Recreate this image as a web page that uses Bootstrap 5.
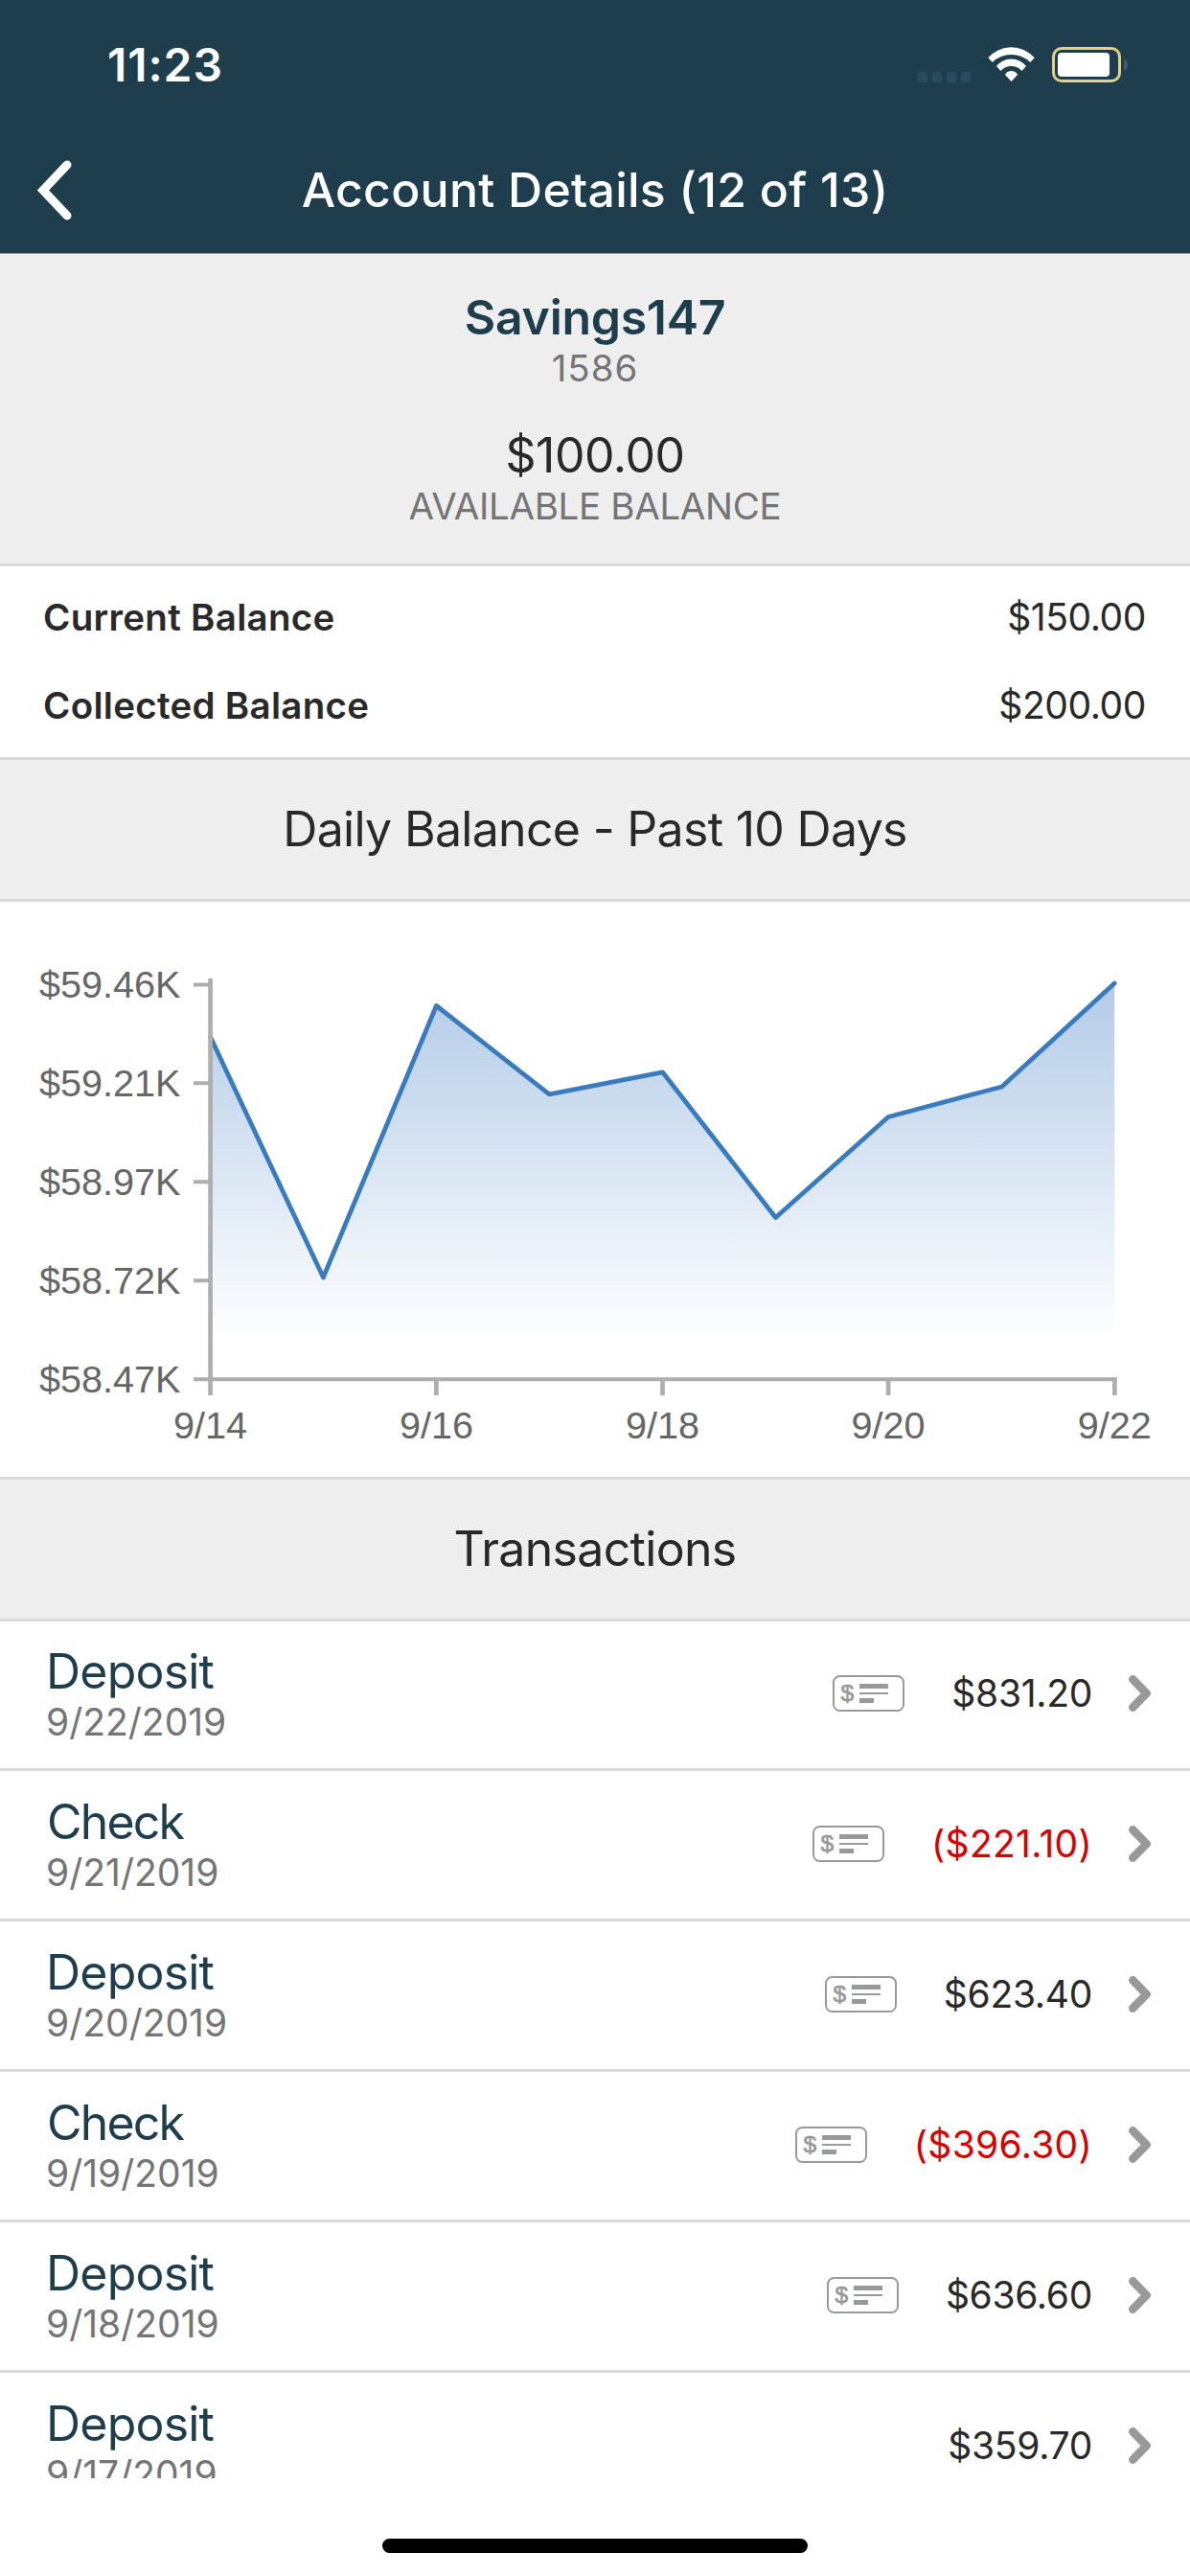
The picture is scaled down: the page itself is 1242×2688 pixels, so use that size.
<!DOCTYPE html>
<html lang="en">
<head>
    <meta charset="UTF-8">
    <meta name="viewport" content="width=device-width, initial-scale=1.0">
    <title>Account Details</title>
    <link href="https://cdn.jsdelivr.net/npm/bootstrap@5.3.0/dist/css/bootstrap.min.css" rel="stylesheet">
    <style>
        body {
            font-family: Inter, sans-serif;
            font-size: 39px;
            color: #292929;
            background: #fff;
        }
        svg { display: block; flex: none; }
        .screen { height: 2688px; }
        .top-bar { background: #1e3d4d; border-bottom: 1px solid #999; }
        .status-row { height: 132px; padding: 4px 63px 0 112px; }
        .clock { font-size: 48px; font-weight: 600; letter-spacing: .9px; line-height: 60px; }
        .title-row { height: 132px; padding: 0 38px; }
        .title-row h1 { font-size: 50px; font-weight: 500; letter-spacing: .24px; line-height: 60px; }
        .side-slot { width: 37px; }

        .band { background: #eee; border-bottom: 3px solid #d9d9d9; }
        .band h2 { font-size: 50px; font-weight: 400; line-height: 145px; letter-spacing: -.69px; }
        .summary { padding: 36px 0 37px; }
        .big-line { font-size: 50px; line-height: 60px; letter-spacing: -.5px; }
        .sub-line { font-size: 38.5px; line-height: 46px; color: #757575; letter-spacing: -.33px; }
        .account-name { color: #1e3d4d; font-weight: 600; letter-spacing: -.3px; }
        .account-no { letter-spacing: .9px; }
        .available { margin-top: 38px; }

        .balances { padding: 7px 46px 8px 45px; border-bottom: 3px solid #d9d9d9; }
        .balance-row { line-height: 92px; }
        .balance-row dt { font-size: 38.5px; font-weight: 600; letter-spacing: .3px; }
        .balance-row dd { letter-spacing: -.4px; }

        .chart-box { border-bottom: 3px solid #d9d9d9; }
        .chart-box text { font-family: "Liberation Sans", Arial, sans-serif; font-size: 39.6px; fill: #666; }

        .tx-row { padding: 23px 40px 25px 48px; border-bottom: 3px solid #d9d9d9; }
        .tx-row:first-child { padding-top: 22px; }
        .tx-name { font-size: 50px; line-height: 60px; letter-spacing: -.8px; color: #1e3d4d; }
        .tx-name.check { letter-spacing: -1.8px; text-indent: 1px; }
        .tx-date { line-height: 46px; color: #757575; }
        .tx-amount { margin: 0 38px 0 49px; line-height: 46px; letter-spacing: -.3px; }
        .tx-amount.debit { color: #d80000; letter-spacing: .3px; }
        .check-icon text { font-family: "Liberation Sans", Arial, sans-serif; font-size: 24.5px; fill: #999; stroke: #999; stroke-width: .7px; }

        .home-area { height: 102px; padding-bottom: 24px; }
        .home-bar { width: 444px; height: 15px; background: #000; }
    </style>
</head>
<body>
    <!-- Shapes shared by the transaction rows -->
    <svg width="0" height="0" class="position-absolute">
        <symbol id="check-shape" viewBox="0 0 75 38">
            <rect x="1" y="1" width="73" height="36" rx="6.5" fill="none" stroke="#999" stroke-width="2"/>
            <path d="M28 9h30v5H28zM28 18h30v2H28zM28 24h15v5H28z" fill="#999"/>
        </symbol>
        <symbol id="chevron" viewBox="0 0 24 38">
            <path d="M4.4 4.4 18.6 19 4.4 33.6" fill="none" stroke="#999" stroke-width="8.6" stroke-linecap="round" stroke-linejoin="round"/>
        </symbol>
    </svg>

    <div class="screen d-flex flex-column overflow-hidden">
        <header class="top-bar text-white flex-shrink-0">
            <div class="status-row d-flex align-items-center justify-content-between">
                <span class="clock">11:23</span>
                <svg width="230" height="38" viewBox="0 0 230 38">
                    <g fill="#264c61">
                        <rect x="9" y="26" width="10" height="11" rx="2"/>
                        <rect x="24" y="26" width="10" height="11" rx="2"/>
                        <rect x="39" y="26" width="10" height="11" rx="2"/>
                        <rect x="54" y="26" width="10" height="11" rx="2"/>
                    </g>
                    <g transform="translate(82 0)" fill="#fff">
                        <path d="M.3 11.3A32 32 0 0 1 48.7 11.3L44.2 16A28.3 28.3 0 0 0 4.8 16Z"/>
                        <path d="M9 20A19.8 19.8 0 0 1 40 20L35.5 25A14.6 14.6 0 0 0 13.5 25Z"/>
                        <path d="M24.5 36 18 29A7.3 7.3 0 0 1 31 29Z"/>
                    </g>
                    <rect x="150.5" y="1.5" width="69" height="34" rx="8.5" fill="none" stroke="#e6cf80" stroke-width="3"/>
                    <rect x="155" y="6" width="54" height="25" rx="4" fill="#fff"/>
                    <path d="M224 12Q228 14 228 18.5T224 25Z" fill="#3a5f70"/>
                </svg>
            </div>
            <div class="title-row d-flex align-items-center justify-content-between">
                <a href="#" class="side-slot" aria-label="Back">
                    <svg width="37" height="63" viewBox="0 0 37 63">
                        <path d="M32 5 7 31.5 32 58" fill="none" stroke="#fff" stroke-width="9" stroke-linecap="round"/>
                    </svg>
                </a>
                <h1 class="m-0">Account Details (12 of 13)</h1>
                <span class="side-slot"></span>
            </div>
        </header>

        <main class="flex-grow-1 overflow-hidden">
            <section class="band summary text-center">
                <div class="big-line account-name">Savings147</div>
                <div class="sub-line account-no">1586</div>
                <div class="big-line available">$100.00</div>
                <div class="sub-line">AVAILABLE BALANCE</div>
            </section>

            <dl class="balances m-0">
                <div class="balance-row d-flex justify-content-between">
                    <dt>Current Balance</dt>
                    <dd class="m-0">$150.00</dd>
                </div>
                <div class="balance-row d-flex justify-content-between">
                    <dt>Collected Balance</dt>
                    <dd class="m-0">$200.00</dd>
                </div>
            </dl>

            <div class="band text-center"><h2 class="m-0">Daily Balance - Past 10 Days</h2></div>

            <div class="chart-box">
                <svg width="1242" height="600" viewBox="0 0 1242 600">
                    <defs>
                        <linearGradient id="area" gradientUnits="userSpaceOnUse" x1="0" y1="86" x2="0" y2="459">
                            <stop offset="0" stop-color="#b3cbe7"/>
                            <stop offset="1" stop-color="#fff"/>
                        </linearGradient>
                    </defs>
                    <path d="M219.6 141 337.4 392 455.4 108.5 573.3 200.8 691.5 177.8 809.5 329.5 927.1 224.5 1045.6 193 1163.2 85V496H219.6Z" fill="url(#area)"/>
                    <path d="M219.6 141 337.4 392 455.4 108.5 573.3 200.8 691.5 177.8 809.5 329.5 927.1 224.5 1045.6 193 1163.2 85" fill="none" stroke="#3a7bc0" stroke-width="4.8" stroke-linejoin="round" stroke-linecap="round"/>
                    <!-- Axes and ticks -->
                    <path d="M219.6 80V515M455.4 498V515M691.5 498V515M927.1 498V515M1163.4 496.5V515" fill="none" stroke="#aeaeae" stroke-width="4.7"/>
                    <path d="M202 86.4H219M202 189.3H219M202 292.3H219M202 395.2H219M202 498.2H1165.7" fill="none" stroke="#aeaeae" stroke-width="4"/>
                    <g text-anchor="end">
                        <text x="188.5" y="100">$59.46K</text>
                        <text x="188.5" y="203">$59.21K</text>
                        <text x="188.5" y="306">$58.97K</text>
                        <text x="188.5" y="409">$58.72K</text>
                        <text x="188.5" y="512">$58.47K</text>
                    </g>
                    <g text-anchor="middle">
                        <text x="219.6" y="560">9/14</text>
                        <text x="455.4" y="560">9/16</text>
                        <text x="691.5" y="560">9/18</text>
                        <text x="927.1" y="560">9/20</text>
                        <text x="1163.2" y="560">9/22</text>
                    </g>
                </svg>
            </div>

            <div class="band text-center"><h2 class="m-0">Transactions</h2></div>

            <div class="tx-list">
                <div class="tx-row d-flex align-items-center">
                    <div class="me-auto">
                        <div class="tx-name">Deposit</div>
                        <div class="tx-date">9/22/2019</div>
                    </div>
                    <svg class="check-icon" width="75" height="38"><use href="#check-shape"/><text x="8.5" y="27.3">$</text></svg>
                    <span class="tx-amount">$831.20</span>
                    <svg width="24" height="38"><use href="#chevron"/></svg>
                </div>
                <div class="tx-row d-flex align-items-center">
                    <div class="me-auto">
                        <div class="tx-name check">Check</div>
                        <div class="tx-date">9/21/2019</div>
                    </div>
                    <svg class="check-icon" width="75" height="38"><use href="#check-shape"/><text x="8.5" y="27.3">$</text></svg>
                    <span class="tx-amount debit">($221.10)</span>
                    <svg width="24" height="38"><use href="#chevron"/></svg>
                </div>
                <div class="tx-row d-flex align-items-center">
                    <div class="me-auto">
                        <div class="tx-name">Deposit</div>
                        <div class="tx-date">9/20/2019</div>
                    </div>
                    <svg class="check-icon" width="75" height="38"><use href="#check-shape"/><text x="8.5" y="27.3">$</text></svg>
                    <span class="tx-amount">$623.40</span>
                    <svg width="24" height="38"><use href="#chevron"/></svg>
                </div>
                <div class="tx-row d-flex align-items-center">
                    <div class="me-auto">
                        <div class="tx-name check">Check</div>
                        <div class="tx-date">9/19/2019</div>
                    </div>
                    <svg class="check-icon" width="75" height="38"><use href="#check-shape"/><text x="8.5" y="27.3">$</text></svg>
                    <span class="tx-amount debit">($396.30)</span>
                    <svg width="24" height="38"><use href="#chevron"/></svg>
                </div>
                <div class="tx-row d-flex align-items-center">
                    <div class="me-auto">
                        <div class="tx-name">Deposit</div>
                        <div class="tx-date">9/18/2019</div>
                    </div>
                    <svg class="check-icon" width="75" height="38"><use href="#check-shape"/><text x="8.5" y="27.3">$</text></svg>
                    <span class="tx-amount">$636.60</span>
                    <svg width="24" height="38"><use href="#chevron"/></svg>
                </div>
                <div class="tx-row d-flex align-items-center">
                    <div class="me-auto">
                        <div class="tx-name">Deposit</div>
                        <div class="tx-date">9/17/2019</div>
                    </div>
                    <span class="tx-amount">$359.70</span>
                    <svg width="24" height="38"><use href="#chevron"/></svg>
                </div>
            </div>
        </main>

        <footer class="home-area d-flex align-items-end justify-content-center flex-shrink-0">
            <div class="home-bar rounded-pill"></div>
        </footer>
    </div>
    <script src="https://cdn.jsdelivr.net/npm/bootstrap@5.3.0/dist/js/bootstrap.bundle.min.js"></script>
</body>
</html>
